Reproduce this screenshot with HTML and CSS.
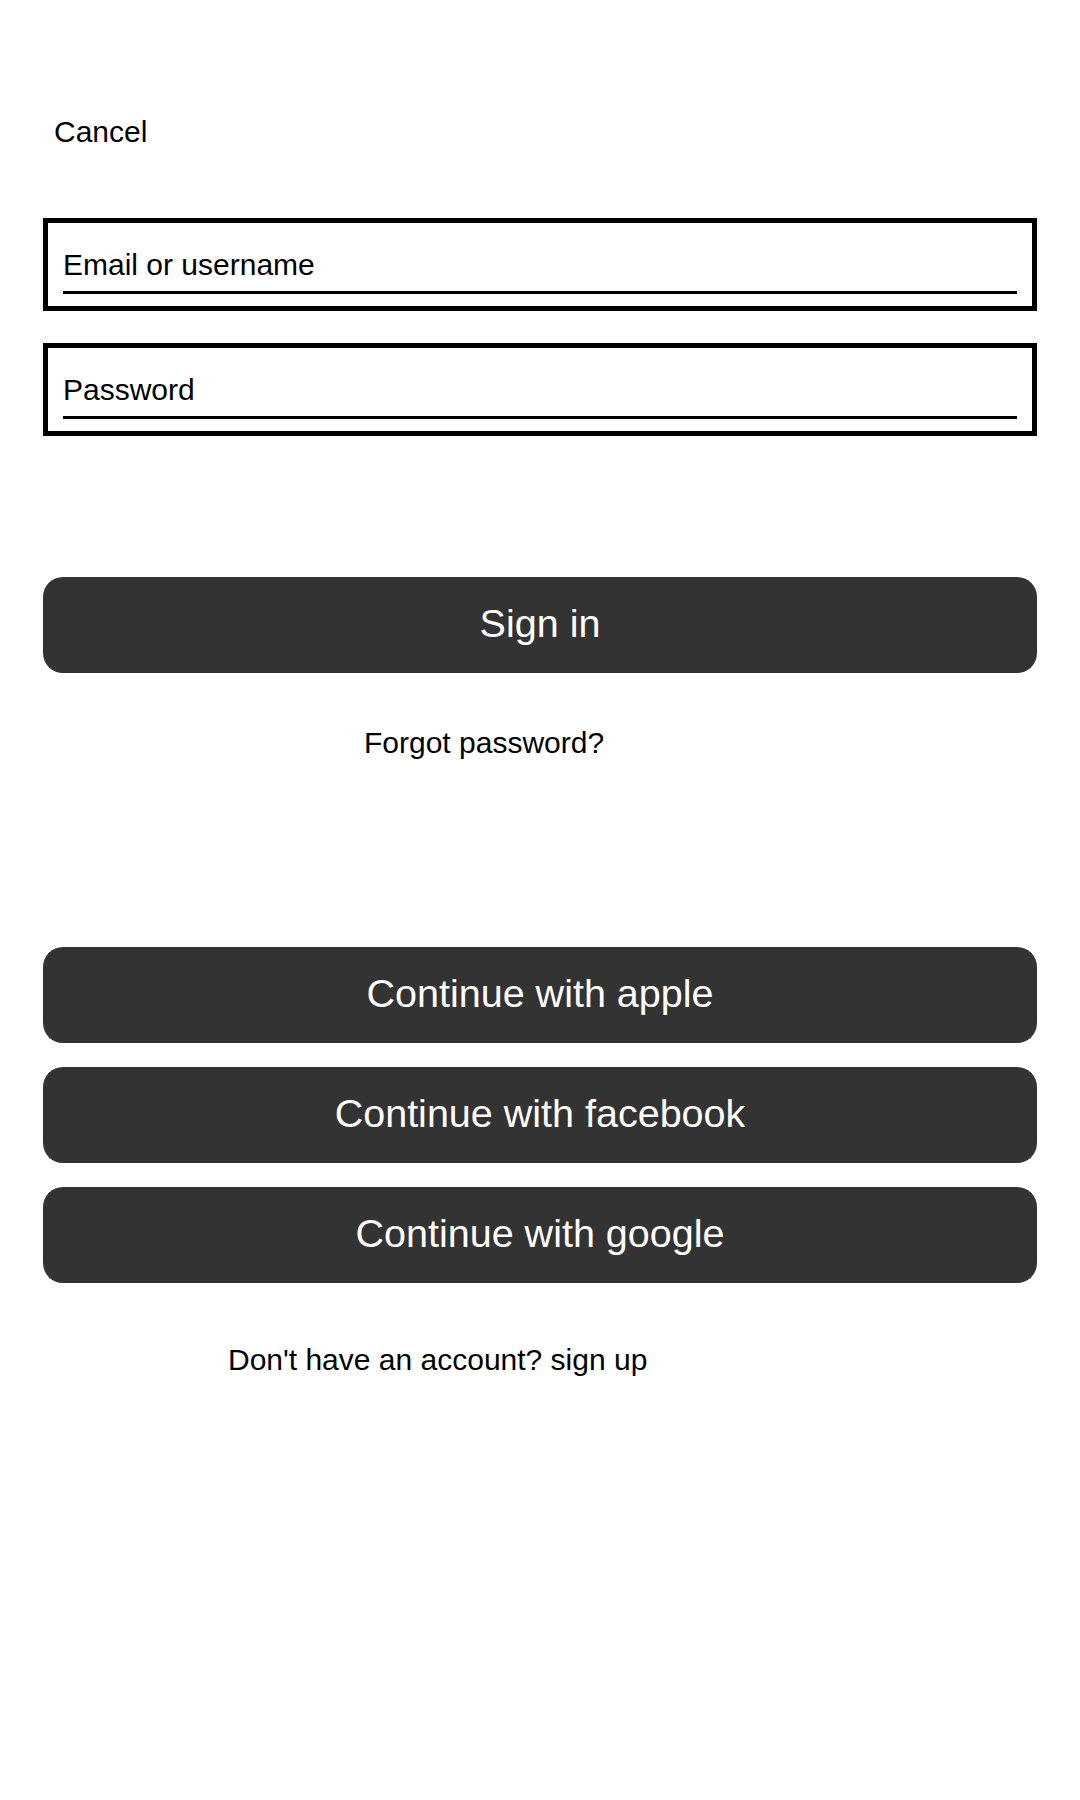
FILE: index.html
```html
<!DOCTYPE html>
<html lang="en">
<head>
<meta charset="utf-8">
<title>Sign in</title>
<link rel="stylesheet" href="styles.css">
</head>
<body>
<main class="screen">
  <div class="cancel">Cancel</div>
  <form class="form">
    <div class="field">
      <input class="field-input" type="text" placeholder="Email or username">
    </div>
    <div class="field">
      <input class="field-input" type="password" placeholder="Password">
    </div>
    <button type="button" class="btn btn-signin">Sign in</button>
  </form>
  <div class="forgot">Forgot password?</div>
  <div class="social">
    <button type="button" class="btn">Continue with apple</button>
    <button type="button" class="btn">Continue with facebook</button>
    <button type="button" class="btn">Continue with google</button>
  </div>
  <div class="signup">Don't have an account? sign up</div>
</main>
</body>
</html>
```

FILE: styles.css
```css
* { box-sizing: border-box; }

html, body {
  margin: 0;
  padding: 0;
  background: #ffffff;
}

body {
  font-family: "Liberation Sans", Arial, sans-serif;
  color: #000000;
  width: 1080px;
  min-height: 1800px;
}

.screen {
  padding: 114.6px 43px 0 43px;
}

.cancel {
  font-size: 30px;
  line-height: 34px;
  padding-left: 11px;
}

.form {
  margin-top: 69.4px;
  display: flex;
  flex-direction: column;
}

.field {
  border: 5px solid #000;
  padding: 25px 15px 12px 15px;
  height: 93px;
}

.field + .field {
  margin-top: 32px;
}

.field-input {
  display: block;
  width: 100%;
  height: 46px;
  margin: 0;
  padding: 0 0 9px 0;
  border: 0;
  border-bottom: 3px solid #000;
  border-radius: 0;
  background: transparent;
  font-family: "Liberation Sans", Arial, sans-serif;
  font-size: 30px;
  line-height: 34px;
  color: #000;
  outline: none;
}

.field-input::placeholder {
  color: #000;
  opacity: 1;
}

.btn {
  display: flex;
  align-items: center;
  justify-content: center;
  width: 100%;
  height: 96px;
  margin: 0;
  padding: 0 0 3px 0;
  border: 0;
  border-radius: 20px;
  background: #333333;
  color: #ffffff;
  font-family: "Liberation Sans", Arial, sans-serif;
  font-size: 39.5px;
  line-height: 46px;
  cursor: pointer;
}

.btn-signin {
  margin-top: 141px;
}

.forgot {
  font-size: 30px;
  line-height: 34px;
  margin-top: 52.6px;
  padding-left: 321px;
}

.social {
  margin-top: 187.4px;
  display: flex;
  flex-direction: column;
  gap: 24px;
}

.signup {
  font-size: 30px;
  line-height: 34px;
  margin-top: 59.6px;
  padding-left: 185px;
}
```
